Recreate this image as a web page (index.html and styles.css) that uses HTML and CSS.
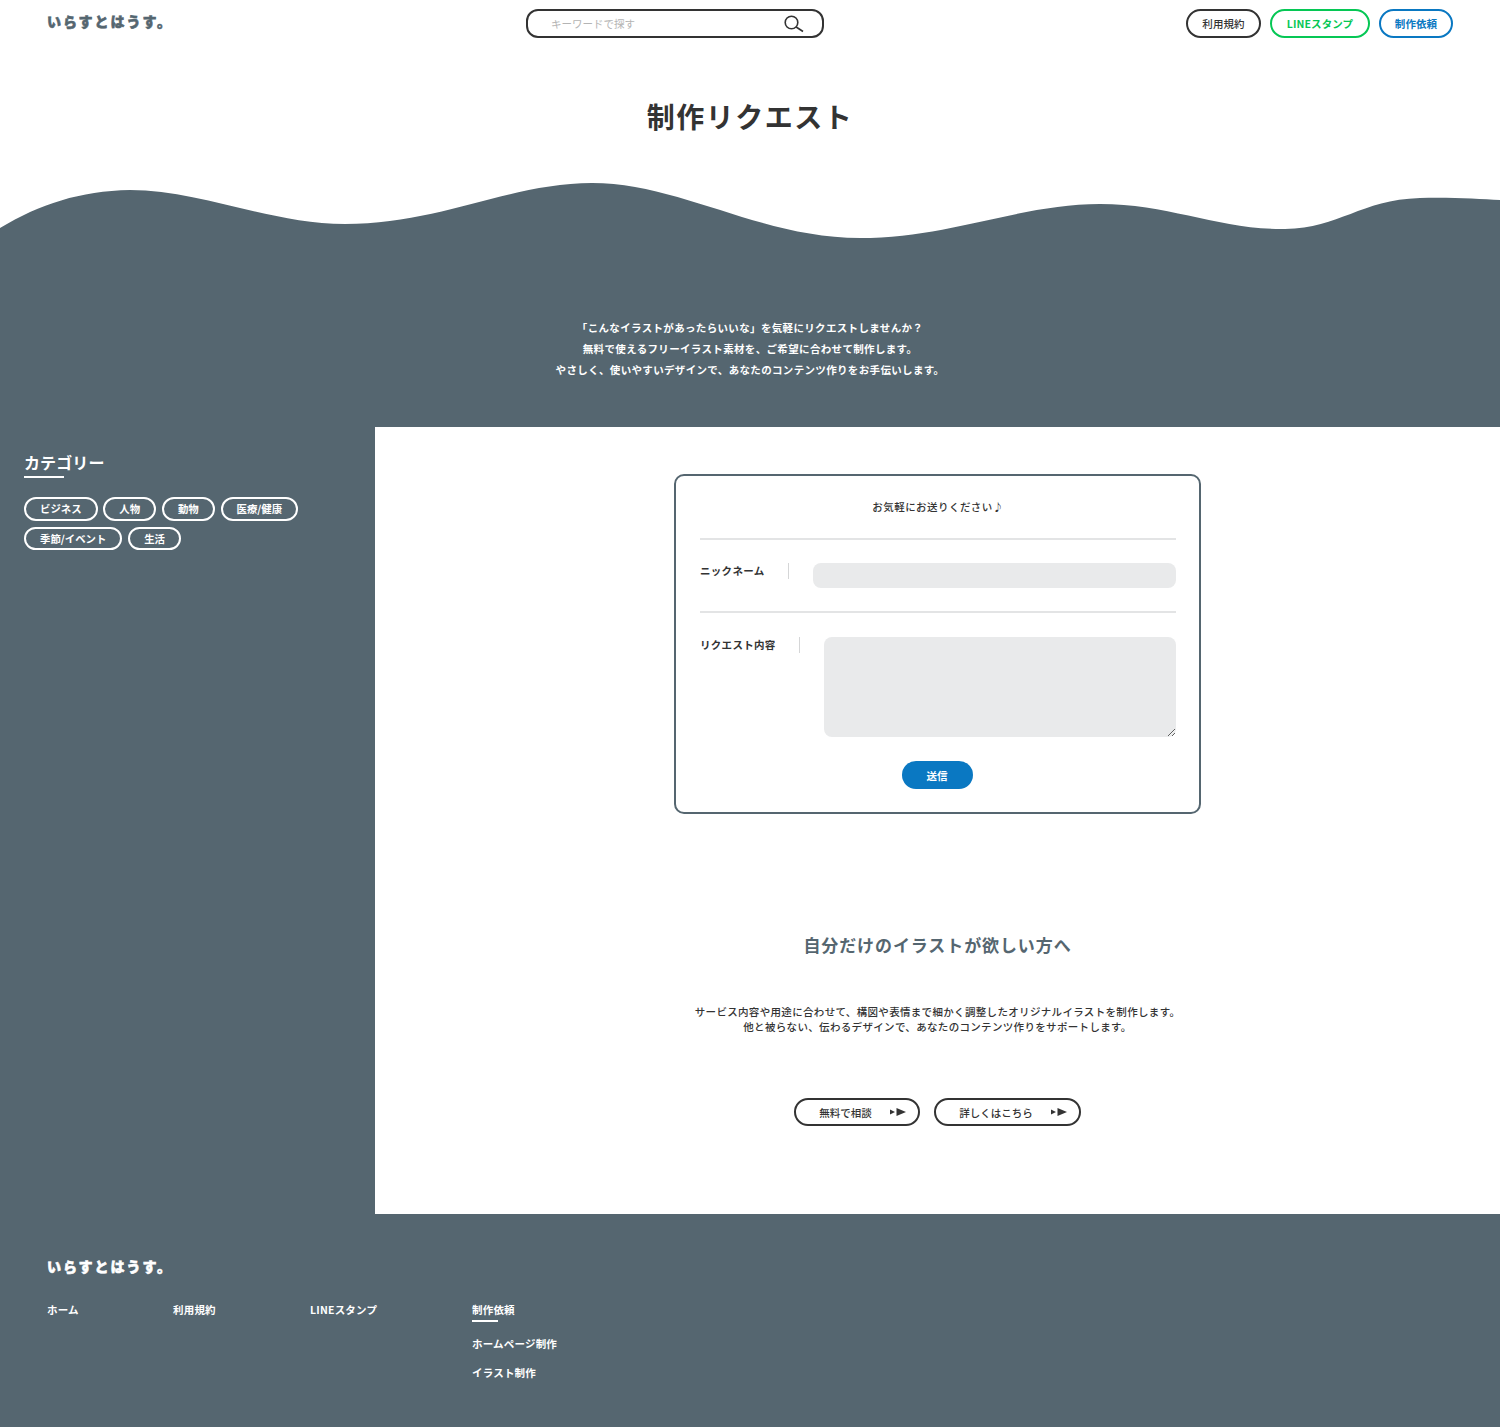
FILE: index.html
```html
<!DOCTYPE html>
<html lang="ja">
<head>
<meta charset="utf-8">
<title>制作リクエスト</title>
<link rel="stylesheet" href="styles.css">
</head>
<body>
<header class="site-header">
  <a class="logo" href="#">いらすとはうす。</a>
  <form class="search">
    <span class="search-text">キーワードで探す</span>
    <svg class="search-icon" width="20" height="18" viewBox="0 0 20 18"><circle cx="7.5" cy="7.5" r="6.3" fill="none" stroke="#333" stroke-width="1.6"/><line x1="12.2" y1="12" x2="19" y2="16.5" stroke="#333" stroke-width="1.6"/></svg>
  </form>
  <nav class="head-nav">
    <a class="pill pill-dark" href="#">利用規約</a>
    <a class="pill pill-green" href="#">LINEスタンプ</a>
    <a class="pill pill-blue" href="#">制作依頼</a>
  </nav>
</header>

<h1 class="page-title">制作リクエスト</h1>
<svg class="wave" viewBox="0 0 1500 60" preserveAspectRatio="none"><path fill="#556670" d="M0 48C40 24 80 11 130 10C200 10 270 44 345 44C440 44 510 3 592 3C680 3 760 58 860 58C950 58 1020 24 1100 24C1170 24 1220 50 1285 49C1340 48 1360 20 1420 18C1450 17 1480 19 1500 20V60H0Z"/></svg>
<section class="intro">
  <p>「こんなイラストがあったらいいな」を気軽にリクエストしませんか？</p>
  <p>無料で使えるフリーイラスト素材を、ご希望に合わせて制作します。</p>
  <p>やさしく、使いやすいデザインで、あなたのコンテンツ作りをお手伝いします。</p>
</section>

<div class="layout">
  <aside class="sidebar">
    <h2 class="side-title">カテゴリー</h2>
    <ul class="tags">
      <li><a class="tag" href="#">ビジネス</a></li>
      <li><a class="tag" href="#">人物</a></li>
      <li><a class="tag" href="#">動物</a></li>
      <li><a class="tag" href="#">医療/健康</a></li>
      <li><a class="tag" href="#">季節/イベント</a></li>
      <li><a class="tag" href="#">生活</a></li>
    </ul>
  </aside>
  <main class="content">
    <form class="card">
      <p class="card-lead">お気軽にお送りください♪</p>
      <div class="field field-top">
        <label class="field-label">ニックネーム</label>
        <input class="input" type="text">
      </div>
      <div class="field field-area">
        <label class="field-label">リクエスト内容</label>
        <textarea class="textarea"></textarea>
      </div>
      <div class="submit-row"><button class="submit" type="button">送信</button></div>
    </form>
    <h2 class="custom-title">自分だけのイラストが欲しい方へ</h2>
    <p class="custom-text">サービス内容や用途に合わせて、構図や表情まで細かく調整したオリジナルイラストを制作します。<br>他と被らない、伝わるデザインで、あなたのコンテンツ作りをサポートします。</p>
    <div class="cta-row">
      <a class="cta" href="#">無料で相談<svg class="arrow" width="16" height="8" viewBox="0 0 16 8"><polygon points="0,1.5 5,4 0,6.5" fill="#333"/><polygon points="6.5,0 16,4 6.5,8" fill="#333"/></svg></a>
      <a class="cta" href="#">詳しくはこちら<svg class="arrow" width="16" height="8" viewBox="0 0 16 8"><polygon points="0,1.5 5,4 0,6.5" fill="#333"/><polygon points="6.5,0 16,4 6.5,8" fill="#333"/></svg></a>
    </div>
  </main>
</div>

<footer class="site-footer">
  <a class="logo logo-light" href="#">いらすとはうす。</a>
  <nav class="foot-nav">
    <a class="foot-link foot-home" href="#">ホーム</a>
    <a class="foot-link foot-terms" href="#">利用規約</a>
    <a class="foot-link foot-line" href="#">LINEスタンプ</a>
    <div class="foot-group">
      <a class="foot-link foot-active" href="#">制作依頼</a>
      <a class="foot-link" href="#">ホームページ制作</a>
      <a class="foot-link" href="#">イラスト制作</a>
    </div>
  </nav>
</footer>
</body>
</html>
```
FILE: styles.css
```css
* { box-sizing: border-box; }
html, body { margin: 0; padding: 0; }
body {
  font-family: "Noto Sans CJK JP", "Noto Sans", sans-serif;
  color: #333;
  background: #fff;
  width: 1500px;
}
a { color: inherit; text-decoration: none; }
p { margin: 0; }

.site-header {
  display: flex;
  justify-content: space-between;
  align-items: flex-start;
  height: 48px;
  padding: 9px 47px 0;
}
.logo {
  display: block;
  width: 117px;
  font-size: 14px;
  line-height: 24px;
  font-weight: 900;
  letter-spacing: 1.95px;
  white-space: nowrap;
  color: #556670;
  -webkit-text-stroke: 0.6px currentColor;
}
.logo-light { color: #fff; }

.search {
  display: flex;
  align-items: center;
  justify-content: space-between;
  width: 298px;
  height: 29px;
  border: 2px solid #333;
  border-radius: 12px;
  padding: 0 18px 0 23px;
}
.search-text { font-size: 10.5px; color: #b4b4b4; }
.search-icon { display: block; margin-top: 1px; }

.head-nav { display: flex; gap: 9px; }
.pill {
  display: flex;
  align-items: center;
  justify-content: center;
  height: 29px;
  border: 2px solid #333;
  border-radius: 15px;
  font-size: 10.5px;
  font-weight: 700;
  letter-spacing: 0.1px;
  white-space: nowrap;
}
.pill-dark { width: 75px; font-weight: 500; }
.pill-green { width: 100px; border-color: #06c755; color: #06c755; }
.pill-blue { width: 74px; border-color: #0a78c2; color: #0a78c2; }

.page-title {
  margin: 0;
  padding: 46px 0 42px;
  text-align: center;
  font-size: 28px;
  line-height: 44px;
  font-weight: 700;
  letter-spacing: 1.5px;
}
.wave { display: block; width: 1500px; height: 60px; }

.intro {
  background: #556670;
  color: #fff;
  height: 187px;
  padding-top: 77px;
  text-align: center;
  font-size: 10.5px;
  line-height: 21px;
  font-weight: 700;
  letter-spacing: 0.34px;
}

.layout { display: grid; grid-template-columns: 375px 1125px; height: 787px; }
.sidebar { background: #556670; padding: 23px 24px 0; color: #fff; }
.side-title {
  margin: 0 0 19px;
  font-size: 16px;
  line-height: 24px;
  font-weight: 700;
  letter-spacing: 0.1px;
}
.side-title::after {
  content: "";
  display: block;
  width: 40px;
  height: 2px;
  margin-top: 2px;
  background: #fff;
}
.tags { list-style: none; margin: 0; padding: 0; display: flex; flex-wrap: wrap; gap: 6px 5.8px; width: 290px; }
.tag {
  display: flex;
  align-items: center;
  height: 23.5px;
  padding: 0 14px;
  border: 2px solid #fff;
  border-radius: 12px;
  font-size: 10.4px;
  font-weight: 700;
  white-space: nowrap;
}

.content { background: #fff; display: flex; flex-direction: column; align-items: center; padding-top: 47px; }
.card {
  width: 527px;
  height: 340px;
  border: 2px solid #556670;
  border-radius: 10px;
  padding: 0 23px 0 24px;
}
.card-lead {
  height: 64px;
  padding-top: 22px;
  text-align: center;
  font-size: 10.5px;
  line-height: 18px;
  font-weight: 500;
  letter-spacing: 0.45px;
  border-bottom: 2px solid #e3e4e5;
}
.field { display: flex; align-items: flex-start; }
.field-top { height: 73px; padding-top: 23px; border-bottom: 2px solid #e3e4e5; }
.field-area { padding-top: 24px; }
.field-label {
  height: 16px;
  padding-right: 23px;
  margin-right: 24px;
  border-right: 1px solid #d5d6d7;
  font-size: 10.5px;
  line-height: 16px;
  font-weight: 700;
  letter-spacing: 0.3px;
  white-space: nowrap;
}
.input {
  flex: 1;
  height: 25px;
  border: 0;
  border-radius: 8px;
  background: #e9eaeb;
  outline: none;
}
.textarea {
  flex: 1;
  height: 100px;
  border: 0;
  border-radius: 8px;
  background: #e9eaeb;
  outline: none;
  display: block;
  margin: 0;
}
.submit-row { display: flex; justify-content: center; padding: 24px 2px 0 0; }
.submit {
  width: 71px;
  height: 28px;
  border: 0;
  border-radius: 14px;
  background: #0a78c2;
  color: #fff;
  font-family: inherit;
  font-size: 10.5px;
  font-weight: 700;
}

.custom-title {
  margin: 116px 0 0;
  color: #556670;
  font-size: 17px;
  line-height: 30px;
  font-weight: 700;
  letter-spacing: 0.9px;
}
.custom-text {
  margin-top: 44px;
  text-align: center;
  font-size: 10.5px;
  line-height: 15px;
  font-weight: 500;
  letter-spacing: 0.33px;
}
.cta-row { display: flex; gap: 14.5px; margin-top: 64px; }
.cta {
  display: flex;
  align-items: center;
  gap: 18px;
  height: 28px;
  padding: 0 12px 0 23px;
  border: 2px solid #333;
  border-radius: 14px;
  font-size: 10.5px;
  font-weight: 500;
  white-space: nowrap;
}
.arrow { display: block; }

.site-footer {
  background: #556670;
  color: #fff;
  height: 213px;
  padding: 40px 47px 0;
}
.foot-nav { display: flex; align-items: flex-start; margin-top: 22px; }
.foot-link {
  display: block;
  font-size: 10.5px;
  line-height: 20px;
  font-weight: 700;
  letter-spacing: 0.2px;
  white-space: nowrap;
}
.foot-home { width: 126px; }
.foot-terms { width: 137px; }
.foot-line { width: 162px; }
.foot-group { display: flex; flex-direction: column; gap: 9px; }
.foot-active { position: relative; margin-bottom: 5px; }
.foot-active::after {
  content: "";
  position: absolute;
  left: 0;
  bottom: -2px;
  width: 26px;
  height: 2px;
  background: #fff;
}
```
